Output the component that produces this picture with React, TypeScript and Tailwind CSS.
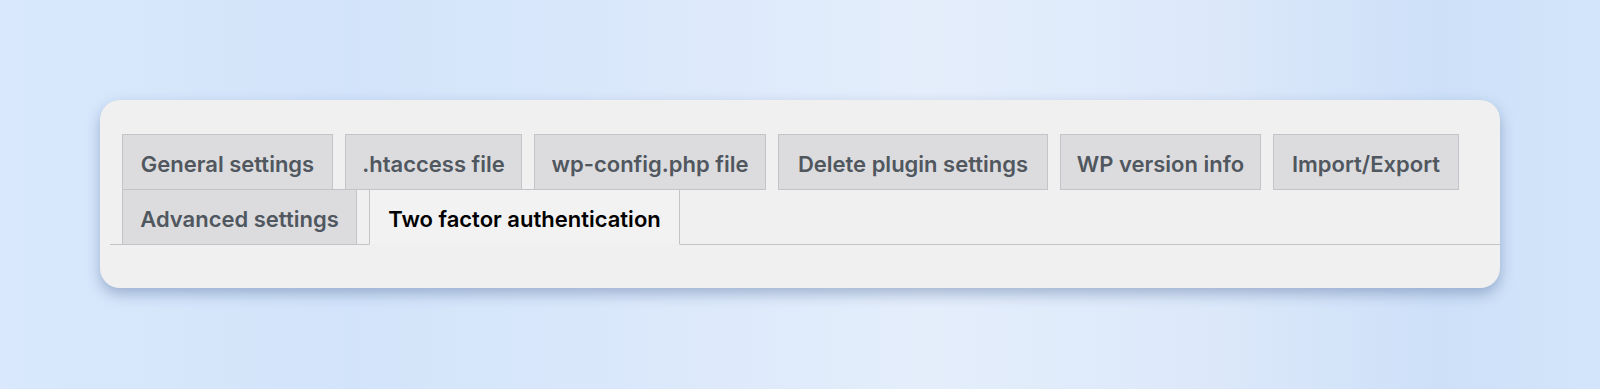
import React, { useState } from 'react';

// widths taken from the screenshot so the wrap matches
const TABS = [
  { label: 'General settings', w: 'w-[211px]' },
  { label: '.htaccess file', w: 'w-[177px]' },
  { label: 'wp-config.php file', w: 'w-[232px]' },
  { label: 'Delete plugin settings', w: 'w-[270px]' },
  { label: 'WP version info', w: 'w-[201px]' },
  { label: 'Import/Export', w: 'w-[186px]' },
  { label: 'Advanced settings', w: 'w-[235px]' },
  { label: 'Two factor authentication', w: 'w-[311px]' },
];

const App: React.FC = () => {
  const [active, setActive] = useState('Two factor authentication');

  return (
    <div
      className="w-[1600px] h-[389px] overflow-hidden px-[100px] pt-[100px] bg-[linear-gradient(90deg,#d9e8fc_0%,#d2e4fa_22%,#dbe8fb_40%,#e4eefb_58%,#dce8fa_76%,#cde0f8_90%,#d3e5fa_100%)]"
      style={{ fontFamily: 'Inter, "Noto Sans", sans-serif' }}
    >
      <div className="h-[188px] rounded-[20px] bg-[#f0f0f0] pt-[34px] pl-[10px] shadow-[0_6px_14px_rgba(60,90,140,0.38)]">
        {/* tab strip, WordPress nav-tab style */}
        <div className="flex flex-wrap border-b border-[#c3c4c7]">
          {TABS.map((tab) => {
            const isActive = tab.label === active;
            return (
              <button
                key={tab.label}
                onClick={() => setActive(tab.label)}
                className={
                  tab.w +
                  (isActive
                    ? ' ml-[12px] -mb-px pt-[11px] pb-[7px] text-center whitespace-nowrap text-[22px] leading-[36px] font-semibold border border-[#c3c4c7] border-b-[#f0f0f0] bg-[#f2f2f2] text-black'
                    : ' ml-[12px] -mb-px pt-[11px] pb-[7px] text-center whitespace-nowrap text-[22px] leading-[36px] font-semibold border border-[#c3c4c7] bg-[#dcdcde] text-[#50575e]')
                }
              >
                {tab.label}
              </button>
            );
          })}
        </div>
      </div>
    </div>
  );
};

export default App;
